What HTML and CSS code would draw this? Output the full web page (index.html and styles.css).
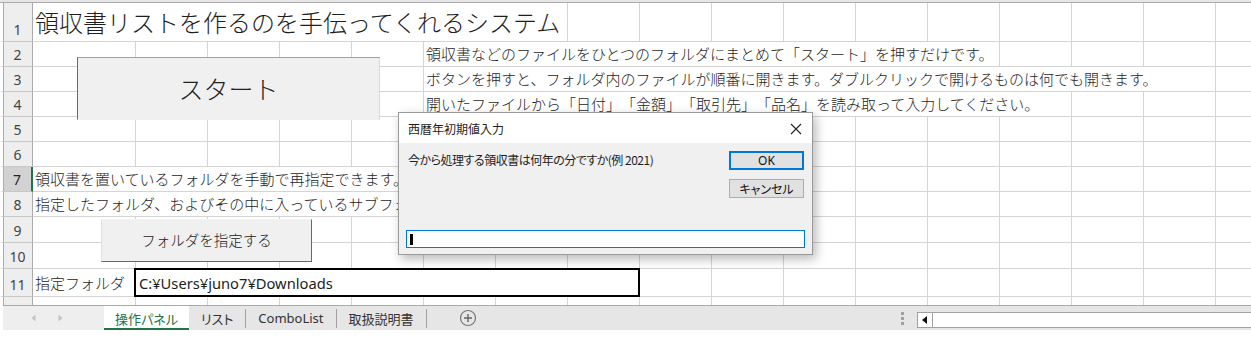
FILE: index.html
```html
<!DOCTYPE html>
<html lang="ja">
<head>
<meta charset="utf-8">
<title>領収書リスト</title>
<link rel="stylesheet" href="styles.css">
</head>
<body>
<div class="app">
  <div class="sheet">
    <div class="colhead"></div>
    <div class="row r1"><div class="rh">1</div><div class="bg"></div><div class="c title">領収書リストを作るのを手伝ってくれるシステム</div></div>
    <div class="row"><div class="rh">2</div><div class="bg"></div><div class="c f8">領収書などのファイルをひとつのフォルダにまとめて「スタート」を押すだけです。</div></div>
    <div class="row"><div class="rh">3</div><div class="bg"></div><div class="c f11">ボタンを押すと、フォルダ内のファイルが順番に開きます。ダブルクリックで開けるものは何でも開きます。</div></div>
    <div class="row"><div class="rh">4</div><div class="bg"></div><div class="c f9">開いたファイルから「日付」「金額」「取引先」「品名」を読み取って入力してください。</div></div>
    <div class="row"><div class="rh">5</div><div class="bg"></div><div class="c a1"></div></div>
    <div class="row"><div class="rh">6</div><div class="bg"></div><div class="c a1"></div></div>
    <div class="row"><div class="rh sel">7</div><div class="bg"></div><div class="c a5">領収書を置いているフォルダを手動で再指定できます。</div></div>
    <div class="row"><div class="rh">8</div><div class="bg"></div><div class="c a9">指定したフォルダ、およびその中に入っているサブフォルダ内のファイルを読み込みます。</div></div>
    <div class="row r26"><div class="rh">9</div><div class="bg"></div><div class="c a1"></div></div>
    <div class="row r26"><div class="rh">10</div><div class="bg"></div><div class="c a1"></div></div>
    <div class="row r11"><div class="rh">11</div><div class="bg"></div><div class="c a1">指定フォルダ</div><div class="c path">C:¥Users¥juno7¥Downloads</div></div>
    <div class="row r12"><div class="rh">12</div><div class="bg"></div><div class="c a1"></div></div>

    <div class="btn start">スタート</div>
    <div class="btn folder">フォルダを指定する</div>

    <div class="dialog">
      <div class="dlg-title">
        <span>西暦年初期値入力</span>
        <svg class="close" width="12" height="12" viewBox="0 0 12 12"><path d="M1 1L11 11M11 1L1 11" stroke="#222" stroke-width="1.1" fill="none"/></svg>
      </div>
      <div class="dlg-body">
        <div class="dlg-top">
          <div class="msg">今から処理する領収書は何年の分ですか(例 2021)</div>
          <div class="dlg-btns">
            <div class="dbtn ok">OK</div>
            <div class="dbtn">キャンセル</div>
          </div>
        </div>
        <div class="input"><span class="caret"></span></div>
      </div>
    </div>
  </div>

  <div class="tabbar">
    <div class="nav">
      <svg width="5" height="8" viewBox="0 0 5 8"><path d="M4.5 0.5V7.5L0.5 4Z" fill="#c4c4c4"/></svg>
      <svg width="5" height="8" viewBox="0 0 5 8"><path d="M0.5 0.5V7.5L4.5 4Z" fill="#c4c4c4"/></svg>
    </div>
    <div class="tab active">操作パネル</div>
    <div class="tab">リスト</div>
    <div class="tsep"></div>
    <div class="tab latin">ComboList</div>
    <div class="tsep"></div>
    <div class="tab">取扱説明書</div>
    <div class="tsep"></div>
    <div class="add"><svg width="18" height="18" viewBox="0 0 18 18"><circle cx="9" cy="9" r="7.5" stroke="#777" stroke-width="1.2" fill="none"/><path d="M9 5V13M5 9H13" stroke="#666" stroke-width="1.4"/></svg></div>
    <div class="spacer"></div>
    <div class="dots"><i></i><i></i><i></i></div>
    <div class="hscroll"><div class="sbtn"><svg width="6" height="8" viewBox="0 0 6 8"><path d="M5 0V8L0 4Z" fill="#111"/></svg></div></div>
  </div>
</div>
</body>
</html>
```

FILE: styles.css
```css
* { box-sizing: border-box; }
html, body { margin: 0; padding: 0; background: #fff; }
body {
  width: 1251px; height: 349px; overflow: hidden;
  font-family: "Noto Sans CJK JP", sans-serif; color: #1e1e1e;
  text-spacing-trim: space-all;
}

.app { width: 1251px; height: 349px; overflow: hidden; position: relative; }
.sheet { position: relative; height: 305px; overflow: hidden; }

.colhead { height: 3px; border-bottom: 1px solid #ababab; background: #e6e6e6; width: 1288px; }

.row {
  display: grid;
  grid-template-columns: 33px 103px repeat(16, 72px);
  height: 25px;
  width: 1288px;
  border-bottom: 1px solid #d4d4d4;
}
.r1 { height: 39px; }
.r26 { height: 26px; }
.r11 { height: 28px; }
.r12 { height: 25px; }

.rh {
  grid-column: 1; grid-row: 1;
  background: #eeeeee;
  border-right: 1px solid #ababab;
  border-left: 3px solid #fff;
  box-shadow: inset 1px 0 0 #ababab;
  margin-bottom: -1px;
  border-bottom: 1px solid #c8c8c8;
  display: flex; align-items: flex-end; justify-content: center;
  font-family: "Noto Sans", sans-serif;
  font-size: 14px; line-height: 17px; padding-bottom: 3px; color: #444;
}
.rh.sel { background: #d2d2d2; border-right: 2px solid #217346; color: #222; }

.bg {
  grid-column: 2 / -1; grid-row: 1;
  background-image: repeating-linear-gradient(90deg, transparent 0 71px, #d4d4d4 71px 72px);
  background-size: calc(100% - 31px) 100%;
  background-position: 31px 0;
  background-repeat: no-repeat;
}

.c {
  grid-row: 1;
  background: #fff;
  border-right: 1px solid #d4d4d4;
  white-space: nowrap;
  overflow: visible;
  display: flex; align-items: center;
  font-size: 15px; line-height: 20px; font-weight: 300;
  padding-left: 2px;
  position: relative; z-index: 1;
  text-spacing-trim: space-all;
}
.a1 { grid-column: 2 / span 1; }
.title { grid-column: 2 / span 7; font-size: 24px; line-height: 30px; padding-left: 2px; }
.f8 { grid-column: 7 / span 8; }
.f9 { grid-column: 7 / span 9; }
.f11 { grid-column: 7 / span 11; }
.a5 { grid-column: 2 / span 5; overflow: hidden; }
.a9 { grid-column: 2 / span 9; }

.path {
  grid-column: 3 / span 7;
  border: 2px solid #000;
  margin: -1px 0 -1px -2px;
  padding-left: 3px;
  font-family: "Noto Sans", sans-serif;
  font-weight: 400;
  font-size: 14.7px;
  z-index: 2;
}

/* form buttons */
.btn {
  position: absolute; z-index: 3;
  background: #f0f0f0;
  display: flex; align-items: center; justify-content: center;
  color: #222; font-weight: 300;
}
.start {
  left: 77px; top: 57px; width: 303px; height: 63px;
  border-top: 1px solid #a0a0a0; border-left: 1px solid #696969;
  border-right: 1px solid #d8d8d8; border-bottom: 1px solid #f0f0f0;
  font-size: 25px; padding-bottom: 1px;
}
.folder {
  left: 101px; top: 219px; width: 211px; height: 43px;
  border-top: 1px solid #f4f4f4; border-left: 1px solid #e0e0e0;
  border-right: 1px solid #696969; border-bottom: 1px solid #696969;
  font-size: 14.5px; padding-bottom: 2px;
}

/* dialog */
.dialog {
  position: absolute; z-index: 5;
  left: 398px; top: 112px; width: 415px; height: 143px;
  background: #f0f0f0;
  border: 1px solid #9a9a9a;
  box-shadow: 3px 4px 10px rgba(0,0,0,0.28);
  display: flex; flex-direction: column;
}
.dlg-title {
  height: 30px; background: #fff;
  display: flex; align-items: center; justify-content: space-between;
  padding: 0 10px 0 9px;
  font-size: 12px;
}
.close { margin-top: 1px; }
.dlg-body { flex: 1; display: flex; flex-direction: column; justify-content: space-between; padding: 8px 7px 6px 7px; }
.dlg-top { display: flex; justify-content: space-between; }
.msg { font-size: 12px; font-feature-settings: "palt"; letter-spacing: -0.5px; padding-left: 2px; padding-top: 0; line-height: 18px; }
.dlg-btns { display: flex; flex-direction: column; gap: 9px; padding-right: 1px; }
.dbtn {
  width: 75px; height: 19px;
  background: #e1e1e1; border: 1px solid #adadad;
  display: flex; align-items: center; justify-content: center;
  font-size: 12px; font-feature-settings: "palt"; color: #111;
}
.dbtn.ok { border: 2px solid #0078d7; font-family: "Noto Sans", sans-serif; }
.input {
  height: 18px; background: #fff; border: 1px solid #0078d7;
  display: flex; align-items: center; padding-left: 3px;
}
.caret { width: 3px; height: 11px; background: #000; }

/* tab bar */
.tabbar {
  height: 25px;
  background: #e6e6e6;
  border-top: 1px solid #a8a8a8;
  display: flex; align-items: stretch;
  font-size: 13px; font-feature-settings: "palt";
  margin-left: 3px;
  white-space: nowrap;
}
.nav { width: 101px; background: #eeeeee; display: flex; align-items: center; gap: 22px; padding-left: 28px; }
.tab { display: flex; align-items: center; padding: 0 12px; color: #333; }
.tab.active { background: #fff; color: #217346; border-bottom: 2px solid #217346; padding: 2px 0 0; width: 85px; justify-content: center; }
.tab.latin { font-family: "Noto Sans", sans-serif; }
.tsep { width: 1px; background: #a0a0a0; margin: 3px 0 2px; }
.add { display: flex; align-items: center; padding-left: 32px; }
.spacer { flex: 1; }
.dots { width: 3px; display: flex; flex-direction: column; justify-content: center; gap: 2px; margin-right: 13px; }
.dots i { display: block; width: 3px; height: 3px; background: #a0a0a0; }
.hscroll { width: 334px; margin: 6px 0 2px; background: #fff; border: 1px solid #a0a0a0; border-right: none; display: flex; }
.sbtn { width: 15px; border-right: 1px solid #a0a0a0; display: flex; align-items: center; justify-content: center; }
```
